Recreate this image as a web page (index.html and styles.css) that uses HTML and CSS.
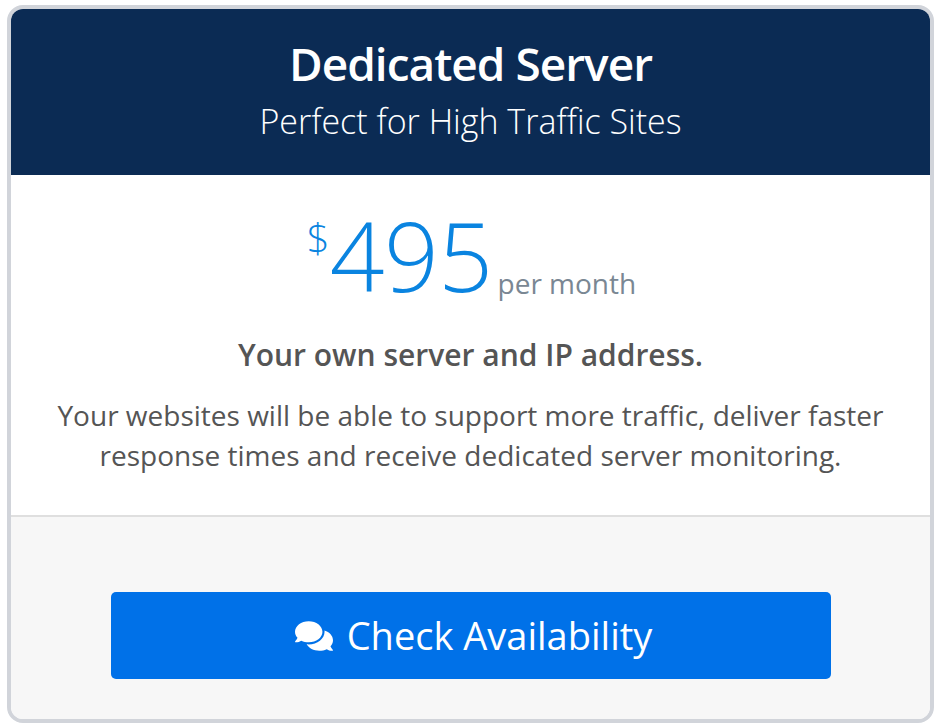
FILE: index.html
```html
<!DOCTYPE html>
<html>
<head>
    <title>Dedicated Server</title>
    <link rel="stylesheet" href="styles.css">
    <meta name="viewport" content="width=device-width, initial-scale=1" />
</head>
<body>
    <div class="plan-card">
        <div class="plan-header">
            <h2 class="plan-name">Dedicated Server</h2>
            <p class="plan-tagline">Perfect for High Traffic Sites</p>
        </div>
        <div class="plan-body">
            <div class="plan-price">
                <span class="price-currency">$</span><span class="price-amount">495</span><span class="price-period">per month</span>
            </div>
            <p class="plan-lead">Your own server and IP address.</p>
            <p class="plan-text">Your websites will be able to support more traffic, deliver faster response times and receive dedicated server monitoring.</p>
        </div>
        <div class="plan-footer">
            <a class="plan-button" href="#">
                <svg class="button-icon" viewBox="0 0 576 512" aria-hidden="true"><path fill="currentColor" d="M416 192c0-88.4-93.1-160-208-160S0 103.6 0 192c0 34.3 14.1 65.9 38 92-13.4 30.2-35.5 54.2-35.8 54.5-2.2 2.3-2.8 5.7-1.5 8.7S4.8 352 8 352c36.6 0 66.9-12.3 88.7-25 32.2 15.7 70.3 25 111.3 25 114.9 0 208-71.6 208-160zm122 220c23.9-26 38-57.7 38-92 0-66.9-53.5-124.2-129.3-148.1.9 6.6 1.3 13.3 1.3 20.1 0 105.9-107.7 192-240 192-10.8 0-21.3-.8-31.7-1.9C207.8 439.6 281.8 480 368 480c41 0 79.1-9.2 111.3-25 21.8 12.7 52.1 25 88.7 25 3.2 0 6.1-1.9 7.3-4.8 1.3-2.9.7-6.3-1.5-8.7-.3-.3-22.4-24.2-35.8-54.5z"/></svg>
                Check Availability
            </a>
        </div>
    </div>
</body>
</html>
```
FILE: styles.css
```css
body {
    font-family: "Open Sans", "Noto Sans", sans-serif;
    background-color: #ffffff;
    color: #555555;
    margin: 5px 8px 0 7px;
}

.plan-card {
    border: 4px solid #d1d4da;
    border-radius: 16px;
    overflow: hidden;
    background-color: #ffffff;
    text-align: center;
}

.plan-header {
    background-color: #0b2b54;
    color: #ffffff;
    height: 166px;
    padding-top: 24px;
    box-sizing: border-box;
}

.plan-name {
    margin: 0;
    font-size: 46px;
    font-weight: 600;
    line-height: 60px;
    letter-spacing: -1px;
}

.plan-tagline {
    margin: 3px 0 0;
    font-size: 34px;
    font-weight: 300;
    line-height: 50px;
}

.plan-body {
    height: 342px;
    box-sizing: border-box;
    padding-top: 32px;
    border-bottom: 2px solid #dfdfdf;
}

.plan-price {
    display: flex;
    justify-content: center;
    align-items: flex-start;
    height: 96px;
    padding-left: 2px;
    color: #0a84e0;
}

.price-currency {
    font-size: 40px;
    font-weight: 300;
    line-height: 50px;
    margin-top: 6px;
}

.price-amount {
    font-size: 96px;
    font-weight: 300;
    line-height: 96px;
    letter-spacing: -0.5px;
}

.price-period {
    font-size: 28px;
    line-height: 38px;
    color: #7a8793;
    margin: 57px 0 0 5px;
}

.plan-lead {
    margin: 32px 0 0;
    font-size: 30px;
    font-weight: 600;
    line-height: 40px;
}

.plan-text {
    margin: 20px 40px 0;
    font-size: 28px;
    line-height: 40px;
}

.plan-footer {
    background-color: #f7f7f7;
    height: 202px;
    box-sizing: border-box;
    padding-top: 75px;
    display: flex;
    justify-content: center;
    align-items: flex-start;
}

.plan-button {
    width: 720px;
    height: 87px;
    box-sizing: border-box;
    padding: 0 0 2px 6px;
    background-color: #0071e8;
    color: #ffffff;
    border-radius: 5px;
    font-size: 38px;
    text-decoration: none;
    display: flex;
    align-items: center;
    justify-content: center;
    gap: 14px;
}

.button-icon {
    width: 38px;
    height: 34px;
    margin-top: 2px;
}
```
